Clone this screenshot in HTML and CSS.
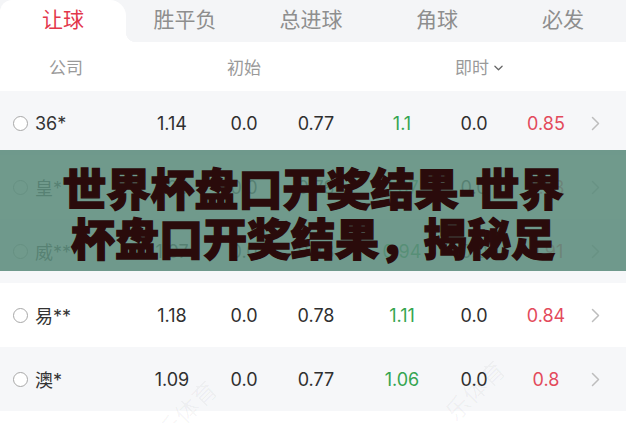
FILE: index.html
```html
<!DOCTYPE html>
<html lang="zh-CN">
<head>
<meta charset="utf-8">
<title>世界杯盘口开奖结果</title>
<link rel="stylesheet" href="styles.css">
</head>
<body>
<div class="page">
  <nav class="tabs">
    <div class="tab active">让球</div>
    <div class="tab">胜平负</div>
    <div class="tab">总进球</div>
    <div class="tab">角球</div>
    <div class="tab">必发</div>
  </nav>

  <div class="head">
    <div class="col-name">公司</div>
    <div class="col-group">初始</div>
    <div class="col-group live">
      <span>即时</span>
      <svg class="caret" viewBox="0 0 10 6" width="9" height="6"><polyline points="1,1 5,5 9,1" fill="none" stroke="#666" stroke-width="1.4" stroke-linecap="round" stroke-linejoin="round"/></svg>
    </div>
  </div>

  <div class="rows">
    <div class="row alt">
      <div class="col-name"><span class="radio"></span><span class="name">36*</span></div>
      <div class="cell">1.14</div><div class="cell">0.0</div><div class="cell">0.77</div>
      <div class="cell first-live up">1.1</div><div class="cell">0.0</div><div class="cell down">0.85</div>
      <svg class="arrow" viewBox="0 0 9 15" width="9" height="15"><polyline points="1.5,1.5 7.5,7.5 1.5,13.5" fill="none" stroke="#bdbdbd" stroke-width="1.5" stroke-linecap="round" stroke-linejoin="round"/></svg>
    </div>
    <div class="row">
      <div class="col-name"><span class="radio"></span><span class="name">皇*</span></div>
      <div class="cell">1.00</div><div class="cell">0.0</div><div class="cell">0.78</div>
      <div class="cell first-live up">1.07</div><div class="cell">0.0</div><div class="cell down">0.78</div>
      <svg class="arrow" viewBox="0 0 9 15" width="9" height="15"><polyline points="1.5,1.5 7.5,7.5 1.5,13.5" fill="none" stroke="#bdbdbd" stroke-width="1.5" stroke-linecap="round" stroke-linejoin="round"/></svg>
    </div>
    <div class="row alt">
      <div class="col-name"><span class="radio"></span><span class="name">威**</span></div>
      <div class="cell">1.07</div><div class="cell">0.0</div><div class="cell">0.78</div>
      <div class="cell first-live up">0.94</div><div class="cell">0.0</div><div class="cell down">0.91</div>
      <svg class="arrow" viewBox="0 0 9 15" width="9" height="15"><polyline points="1.5,1.5 7.5,7.5 1.5,13.5" fill="none" stroke="#bdbdbd" stroke-width="1.5" stroke-linecap="round" stroke-linejoin="round"/></svg>
    </div>
    <div class="row">
      <div class="col-name"><span class="radio"></span><span class="name">易**</span></div>
      <div class="cell">1.18</div><div class="cell">0.0</div><div class="cell">0.78</div>
      <div class="cell first-live up">1.11</div><div class="cell">0.0</div><div class="cell down">0.84</div>
      <svg class="arrow" viewBox="0 0 9 15" width="9" height="15"><polyline points="1.5,1.5 7.5,7.5 1.5,13.5" fill="none" stroke="#bdbdbd" stroke-width="1.5" stroke-linecap="round" stroke-linejoin="round"/></svg>
    </div>
    <div class="row alt">
      <div class="col-name"><span class="radio"></span><span class="name">澳*</span></div>
      <div class="cell">1.09</div><div class="cell">0.0</div><div class="cell">0.77</div>
      <div class="cell first-live up">1.06</div><div class="cell">0.0</div><div class="cell down">0.8</div>
      <svg class="arrow" viewBox="0 0 9 15" width="9" height="15"><polyline points="1.5,1.5 7.5,7.5 1.5,13.5" fill="none" stroke="#bdbdbd" stroke-width="1.5" stroke-linecap="round" stroke-linejoin="round"/></svg>
    </div>
    <div class="row tail"></div>
  </div>

  <span class="watermark wm-a">乐体育</span>
  <span class="watermark wm-b">乐体育</span>

  <div class="banner">
    <h1 class="banner-title">世界杯盘口开奖结果-世界杯盘口开奖结果，揭秘足</h1>
  </div>
</div>
</body>
</html>
```

FILE: styles.css
```css
* {
  box-sizing: border-box;
}

html, body {
  margin: 0;
  padding: 0;
  background: #ffffff;
}

body {
  font-family: Inter, "Noto Sans CJK SC", "Noto Sans", sans-serif;
  color: #2f2f2f;
}

.page {
  position: relative;
  width: 626px;
  height: 423px;
  overflow: hidden;
  background: #ffffff;
}

/* market tabs */
.tabs {
  display: flex;
  height: 42px;
  background: #f4f5f7;
}

.tab {
  position: relative;
  flex: 1;
  height: 42px;
  padding-top: 3px;
  line-height: 30px;
  text-align: center;
  font-family: "Noto Sans CJK SC", sans-serif;
  font-size: 21px;
  color: #8e8e8e;
}

.tab.active {
  color: #e3374c;
  background: #ffffff;
  border-top-left-radius: 12px;
  border-top-right-radius: 16px;
  margin-right: -4px;
}

.tab.active::after {
  content: "";
  position: absolute;
  right: -10px;
  bottom: 0;
  width: 10px;
  height: 10px;
  background: radial-gradient(circle at 100% 0, transparent 10px, #ffffff 10.5px);
}

/* column header */
.head {
  display: flex;
  align-items: center;
  height: 49px;
  background: #ffffff;
  font-family: "Noto Sans CJK SC", sans-serif;
  font-size: 17px;
  color: #9a9a9a;
}

.head .col-name {
  width: 136px;
  text-align: center;
  padding-right: 4px;
}

.col-group {
  width: 216px;
  text-align: center;
}

.col-group.live {
  margin-left: 14px;
  display: flex;
  justify-content: center;
  align-items: center;
  gap: 5px;
  padding-left: 10px;
}

.caret {
  display: block;
  margin-top: 2px;
}

/* bookmaker rows */
.row {
  display: flex;
  align-items: center;
  height: 64px;
  background: #ffffff;
  font-size: 18px;
}

.row.alt {
  background: #f6f7f9;
}

.row.tail {
  height: 20px;
}

.row .col-name {
  width: 136px;
  display: flex;
  align-items: center;
  padding-left: 13px;
}

.radio {
  width: 15px;
  height: 15px;
  border: 1px solid #a8a8a8;
  border-radius: 50%;
  background: #ffffff;
  flex-shrink: 0;
}

.name {
  margin-left: 7px;
  color: #333333;
}

.cell {
  width: 72px;
  text-align: center;
  color: #2f2f2f;
}

.cell.first-live {
  margin-left: 14px;
}

.cell.up {
  color: #35a550;
}

.cell.down {
  color: #e34a5b;
}

.arrow {
  display: block;
  margin-left: 9px;
}

/* faint brand marks */
.watermark {
  position: absolute;
  font-family: "Noto Sans CJK SC", sans-serif;
  font-size: 24px;
  color: rgba(0, 0, 0, 0.04);
  transform: rotate(-45deg);
  white-space: nowrap;
  pointer-events: none;
}

.wm-a {
  left: 438px;
  top: 372px;
}

.wm-b {
  left: 150px;
  top: 392px;
}

/* headline banner laid over the table */
.banner {
  position: absolute;
  left: 0;
  top: 150px;
  width: 626px;
  height: 121px;
  padding-top: 12px;
  background: rgba(92, 140, 124, 0.88);
  display: flex;
  justify-content: center;
}

.banner-title {
  margin: 0;
  width: 518px;
  text-align: center;
  font-family: "Noto Sans CJK SC", sans-serif;
  font-weight: 900;
  font-size: 44px;
  line-height: 50px;
  color: #2a0b0b;
  -webkit-text-stroke: 1.4px #2a0b0b;
}
```
